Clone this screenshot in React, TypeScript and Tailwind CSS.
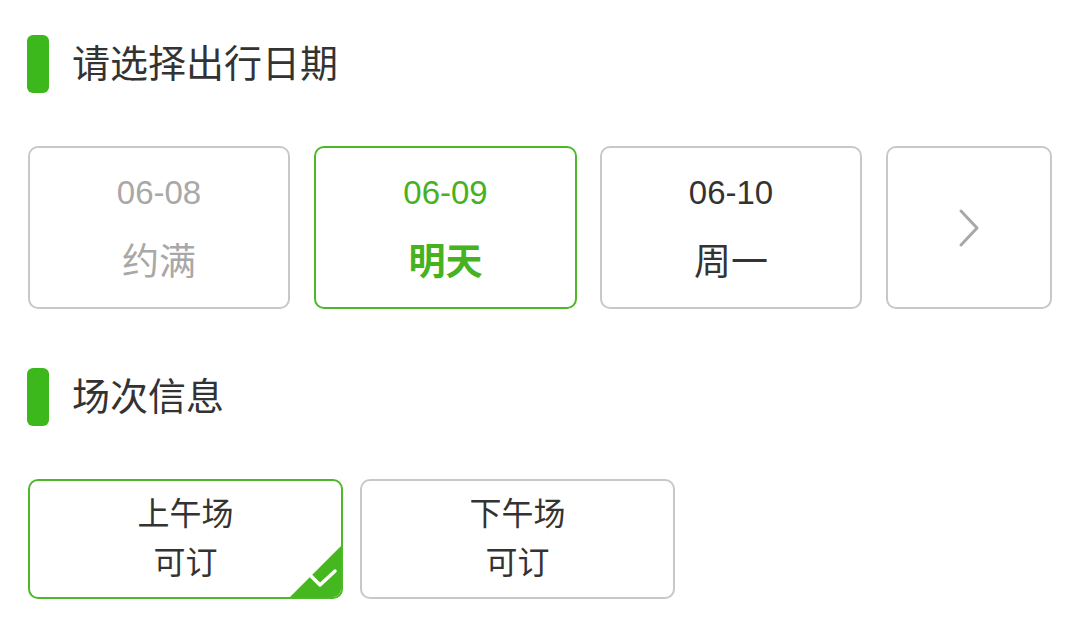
import React from "react";

const font = { fontFamily: '"Liberation Sans", "Noto Sans CJK SC", sans-serif' };

function Heading({ children }: { children: React.ReactNode }) {
  return (
    <div className="flex items-center h-[58px]">
      <div className="w-[22px] h-[58px] rounded-[6px] bg-[#3cb81c]" />
      <div className="ml-[23px] text-[38px] leading-[58px] text-[#333333]">{children}</div>
    </div>
  );
}

function DateCard({
  date,
  label,
  state,
  width,
}: {
  date: string;
  label: string;
  state: "disabled" | "selected" | "normal";
  width: string;
}) {
  const border =
    state === "selected" ? "border-[#4cb82a]" : "border-[#c8c8c8]";
  const dateColor =
    state === "selected" ? "text-[#46b21f]" : state === "disabled" ? "text-[#a8a8a8]" : "text-[#333333]";
  const labelColor =
    state === "selected"
      ? "text-[#46b21f] font-bold"
      : state === "disabled"
      ? "text-[#a8a8a8]"
      : "text-[#333333]";
  return (
    <div
      className={`${width} h-[163px] shrink-0 rounded-[10px] border-2 ${border} bg-white flex flex-col items-center justify-center`}
    >
      <div className={`text-[33px] leading-[40px] ${dateColor}`}>{date}</div>
      <div className={`text-[37px] leading-[40px] mt-[30px] ${labelColor}`}>{label}</div>
    </div>
  );
}

export default function App() {
  return (
    <div className="w-[1080px] h-[627px] bg-white overflow-hidden" style={font}>
      <div className="pl-[27px] pt-[35px]">
        <Heading>请选择出行日期</Heading>
        <div className="flex mt-[53px] pl-[1px]">
          <DateCard date="06-08" label="约满" state="disabled" width="w-[262px]" />
          <div className="w-[24px] shrink-0" />
          <DateCard date="06-09" label="明天" state="selected" width="w-[263px]" />
          <div className="w-[23px] shrink-0" />
          <DateCard date="06-10" label="周一" state="normal" width="w-[262px]" />
          <div className="w-[24px] shrink-0" />
          <div className="w-[166px] h-[163px] shrink-0 rounded-[10px] border-2 border-[#c8c8c8] bg-white flex items-center justify-center">
            <svg width="22" height="40" viewBox="0 0 22 40">
              <path d="M3 3 L19 20 L3 37" fill="none" stroke="#a8a8a8" strokeWidth="3" strokeLinecap="round" strokeLinejoin="round" />
            </svg>
          </div>
        </div>
        <div className="mt-[59px]">
          <Heading>场次信息</Heading>
        </div>
        <div className="flex mt-[53px] pl-[1px] gap-[17px]">
          <div className="relative w-[315px] h-[120px] rounded-[10px] border-2 border-[#4cb82a] bg-white overflow-hidden flex flex-col items-center justify-center">
            <div className="text-[32px] leading-[49px] text-[#333333]">上午场</div>
            <div className="text-[32px] leading-[49px] text-[#333333]">可订</div>
            <svg width="51" height="51" viewBox="0 0 51 51" className="absolute right-0 bottom-0">
              <path d="M51 0 L51 51 L0 51 Z" fill="#46b81f" />
              <path d="M21 30 L30 39 L45 25" fill="none" stroke="#ffffff" strokeWidth="3.5" strokeLinecap="round" strokeLinejoin="round" />
            </svg>
          </div>
          <div className="w-[315px] h-[120px] rounded-[10px] border-2 border-[#c8c8c8] bg-white flex flex-col items-center justify-center">
            <div className="text-[32px] leading-[49px] text-[#333333]">下午场</div>
            <div className="text-[32px] leading-[49px] text-[#333333]">可订</div>
          </div>
        </div>
      </div>
    </div>
  );
}
